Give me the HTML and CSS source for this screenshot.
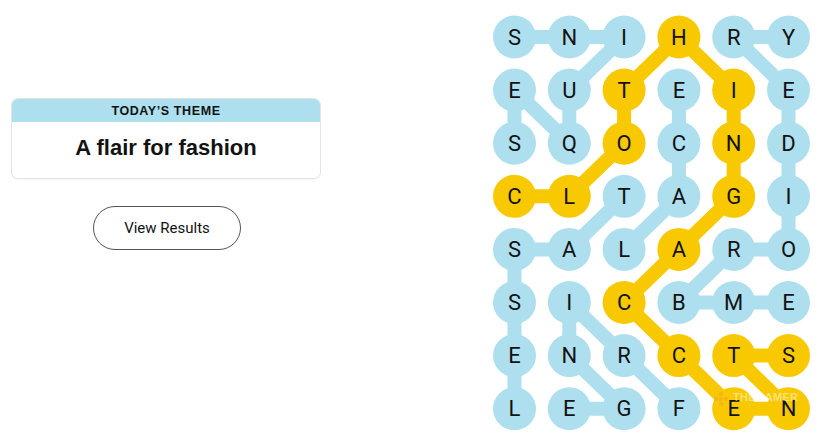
FILE: index.html
```html
<!DOCTYPE html>
<html>
<head>
<meta charset="utf-8">
<link rel="stylesheet" href="styles.css">
</head>
<body>
<div class="page">
  <section class="side">
    <div class="theme-card">
      <div class="theme-head">TODAY’S THEME</div>
      <div class="theme-title">A flair for fashion</div>
    </div>
    <button class="results-btn">View Results</button>
  </section>
  <section class="board">
    <svg class="grid" width="340" height="437" viewBox="0 0 340 437">
      <g class="lines blue-line">
        <polyline points="29.5,143.2 29.5,90.1 84.3,143.2 84.3,90.1 139.1,37 84.3,37 29.5,37"/>
        <polyline points="303.5,302.5 248.7,302.5 193.9,302.5 248.7,249.4 303.5,249.4 303.5,196.3 303.5,143.2 303.5,90.1 248.7,37 303.5,37"/>
        <polyline points="139.1,249.4 193.9,196.3 193.9,143.2 193.9,90.1"/>
        <polyline points="139.1,196.3 84.3,249.4 29.5,249.4 29.5,302.5 29.5,355.6 29.5,408.7"/>
        <polyline points="193.9,408.7 139.1,355.6 84.3,302.5 84.3,355.6 139.1,408.7 84.3,408.7"/>
      </g>
      <g class="lines yellow-line">
        <polyline points="29.5,196.3 84.3,196.3 139.1,143.2 139.1,90.1 193.9,37 248.7,90.1 248.7,143.2 248.7,196.3 193.9,249.4 139.1,302.5 193.9,355.6 248.7,408.7 303.5,408.7 248.7,355.6 303.5,355.6"/>
      </g>
      <g class="cells">
        <circle class="b" cx="29.5" cy="37" r="21.5"/><circle class="b" cx="84.3" cy="37" r="21.5"/><circle class="b" cx="139.1" cy="37" r="21.5"/><circle class="y" cx="193.9" cy="37" r="21.5"/><circle class="b" cx="248.7" cy="37" r="21.5"/><circle class="b" cx="303.5" cy="37" r="21.5"/>
        <circle class="b" cx="29.5" cy="90.1" r="21.5"/><circle class="b" cx="84.3" cy="90.1" r="21.5"/><circle class="y" cx="139.1" cy="90.1" r="21.5"/><circle class="b" cx="193.9" cy="90.1" r="21.5"/><circle class="y" cx="248.7" cy="90.1" r="21.5"/><circle class="b" cx="303.5" cy="90.1" r="21.5"/>
        <circle class="b" cx="29.5" cy="143.2" r="21.5"/><circle class="b" cx="84.3" cy="143.2" r="21.5"/><circle class="y" cx="139.1" cy="143.2" r="21.5"/><circle class="b" cx="193.9" cy="143.2" r="21.5"/><circle class="y" cx="248.7" cy="143.2" r="21.5"/><circle class="b" cx="303.5" cy="143.2" r="21.5"/>
        <circle class="y" cx="29.5" cy="196.3" r="21.5"/><circle class="y" cx="84.3" cy="196.3" r="21.5"/><circle class="b" cx="139.1" cy="196.3" r="21.5"/><circle class="b" cx="193.9" cy="196.3" r="21.5"/><circle class="y" cx="248.7" cy="196.3" r="21.5"/><circle class="b" cx="303.5" cy="196.3" r="21.5"/>
        <circle class="b" cx="29.5" cy="249.4" r="21.5"/><circle class="b" cx="84.3" cy="249.4" r="21.5"/><circle class="b" cx="139.1" cy="249.4" r="21.5"/><circle class="y" cx="193.9" cy="249.4" r="21.5"/><circle class="b" cx="248.7" cy="249.4" r="21.5"/><circle class="b" cx="303.5" cy="249.4" r="21.5"/>
        <circle class="b" cx="29.5" cy="302.5" r="21.5"/><circle class="b" cx="84.3" cy="302.5" r="21.5"/><circle class="y" cx="139.1" cy="302.5" r="21.5"/><circle class="b" cx="193.9" cy="302.5" r="21.5"/><circle class="b" cx="248.7" cy="302.5" r="21.5"/><circle class="b" cx="303.5" cy="302.5" r="21.5"/>
        <circle class="b" cx="29.5" cy="355.6" r="21.5"/><circle class="b" cx="84.3" cy="355.6" r="21.5"/><circle class="b" cx="139.1" cy="355.6" r="21.5"/><circle class="y" cx="193.9" cy="355.6" r="21.5"/><circle class="y" cx="248.7" cy="355.6" r="21.5"/><circle class="y" cx="303.5" cy="355.6" r="21.5"/>
        <circle class="b" cx="29.5" cy="408.7" r="21.5"/><circle class="b" cx="84.3" cy="408.7" r="21.5"/><circle class="b" cx="139.1" cy="408.7" r="21.5"/><circle class="b" cx="193.9" cy="408.7" r="21.5"/><circle class="y" cx="248.7" cy="408.7" r="21.5"/><circle class="y" cx="303.5" cy="408.7" r="21.5"/>
      </g>
      <g class="letters">
        <text x="29.5" y="37">S</text><text x="84.3" y="37">N</text><text x="139.1" y="37">I</text><text x="193.9" y="37">H</text><text x="248.7" y="37">R</text><text x="303.5" y="37">Y</text>
        <text x="29.5" y="90.1">E</text><text x="84.3" y="90.1">U</text><text x="139.1" y="90.1">T</text><text x="193.9" y="90.1">E</text><text x="248.7" y="90.1">I</text><text x="303.5" y="90.1">E</text>
        <text x="29.5" y="143.2">S</text><text x="84.3" y="143.2">Q</text><text x="139.1" y="143.2">O</text><text x="193.9" y="143.2">C</text><text x="248.7" y="143.2">N</text><text x="303.5" y="143.2">D</text>
        <text x="29.5" y="196.3">C</text><text x="84.3" y="196.3">L</text><text x="139.1" y="196.3">T</text><text x="193.9" y="196.3">A</text><text x="248.7" y="196.3">G</text><text x="303.5" y="196.3">I</text>
        <text x="29.5" y="249.4">S</text><text x="84.3" y="249.4">A</text><text x="139.1" y="249.4">L</text><text x="193.9" y="249.4">A</text><text x="248.7" y="249.4">R</text><text x="303.5" y="249.4">O</text>
        <text x="29.5" y="302.5">S</text><text x="84.3" y="302.5">I</text><text x="139.1" y="302.5">C</text><text x="193.9" y="302.5">B</text><text x="248.7" y="302.5">M</text><text x="303.5" y="302.5">E</text>
        <text x="29.5" y="355.6">E</text><text x="84.3" y="355.6">N</text><text x="139.1" y="355.6">R</text><text x="193.9" y="355.6">C</text><text x="248.7" y="355.6">T</text><text x="303.5" y="355.6">S</text>
        <text x="29.5" y="408.7">L</text><text x="84.3" y="408.7">E</text><text x="139.1" y="408.7">G</text><text x="193.9" y="408.7">F</text><text x="248.7" y="408.7">E</text><text x="303.5" y="408.7">N</text>
      </g>
      <g class="watermark">
        <g class="wm-logo" transform="translate(236,399)">
          <circle cx="0" cy="-5" r="2.2"/><circle cx="-5" cy="0" r="2.2"/><circle cx="5" cy="0" r="2.2"/><circle cx="0" cy="5" r="2.2"/><circle cx="0" cy="0" r="2.2"/>
        </g>
        <text class="wm-text" x="248" y="397">THEGAMER</text>
      </g>
    </svg>
  </section>
</div>
</body>
</html>
```

FILE: styles.css
```css
html, body {
  margin: 0;
  padding: 0;
  background: #ffffff;
}

.page {
  display: flex;
  width: 825px;
  height: 437px;
  overflow: hidden;
}

.side {
  width: 474px;
  padding: 98px 0 0 11px;
  box-sizing: border-box;
  display: flex;
  flex-direction: column;
  align-items: flex-start;
}

.theme-card {
  width: 310px;
  border: 1px solid #e4e4e4;
  border-radius: 7px;
  overflow: hidden;
  box-sizing: border-box;
  background: #fff;
  box-shadow: 0 1px 2px rgba(0, 0, 0, 0.04);
}

.theme-head {
  background: #aedfee;
  height: 23px;
  line-height: 24px;
  text-align: center;
  font-family: "Liberation Sans", Arial, sans-serif;
  font-weight: 700;
  font-size: 12.5px;
  letter-spacing: 0.6px;
  color: #121212;
}

.theme-title {
  height: 56px;
  line-height: 52px;
  text-align: center;
  font-family: "Liberation Sans", Arial, sans-serif;
  font-weight: 700;
  font-size: 22px;
  color: #121212;
}

.results-btn {
  margin: 27px 0 0 82px;
  width: 148px;
  height: 44px;
  border: 1px solid #555;
  border-radius: 22px;
  background: #fff;
  font-family: Roboto, "Liberation Sans", sans-serif;
  font-size: 15px;
  color: #121212;
  padding: 0;
}

.board {
  width: 340px;
  margin-left: 11px;
}

.grid {
  display: block;
}

.lines polyline {
  fill: none;
  stroke-width: 14;
  stroke-linejoin: round;
  stroke-linecap: round;
}

.blue-line polyline { stroke: #aedfee; }
.yellow-line polyline { stroke: #f8c900; }

.cells .b { fill: #aedfee; }
.cells .y { fill: #f8c900; }

.letters text {
  font-family: Roboto, "Liberation Sans", sans-serif;
  font-size: 22px;
  fill: #121212;
  text-anchor: middle;
  dominant-baseline: central;
}

.wm-logo circle {
  fill: #f3a52a;
  opacity: 0.55;
}

.wm-text {
  font-family: "Liberation Sans", Arial, sans-serif;
  font-weight: 700;
  font-size: 11px;
  fill: #ffffff;
  opacity: 0.45;
  dominant-baseline: central;
  letter-spacing: 0.3px;
}
```
